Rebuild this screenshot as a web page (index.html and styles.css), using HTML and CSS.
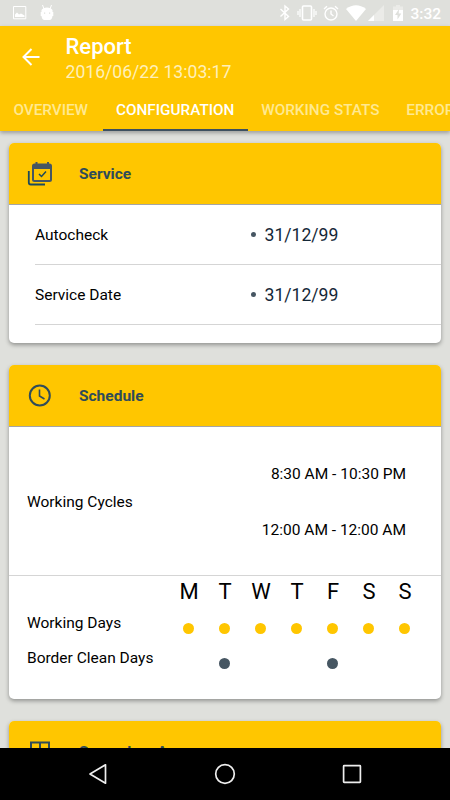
FILE: index.html
```html
<!DOCTYPE html>
<html lang="en">
<head>
    <meta charset="UTF-8">
    <meta name="viewport" content="width=device-width, initial-scale=1.0">
    <title>Report</title>
    <link rel="stylesheet" href="styles.css">
</head>
<body>
    <div class="status-bar">
        <div class="status-left">
            <svg width="14" height="14" viewBox="0 0 14 14"><path d="M.5.5h12.3v12.3H.5z" fill="none" stroke="#fff"/><path d="M2 11V8.500l2-2 2 2 2-1 3.500 2V11z" fill="#fff"/></svg>
            <svg width="14" height="17" viewBox="0 0 14 17"><path d="M2.500 1L4 5M11.500 1L10 5" stroke="#fff"/><path fill="#fff" fill-rule="evenodd" d="M1.500 6Q3 3.500 7 3.500T12.500 6v2h.8v4h-.8q-.5 4-3 4h-5q-2.500 0-3-4H.7V8h.8zM4 8.500v1.200h1.200V8.500zM9 8.500v1.200h1.200V8.500z"/></svg>
        </div>
        <div class="status-right">
            <svg width="12" height="18" viewBox="0 0 12 18"><path d="M1.500 5l8 7.500L6 15.500V2l3.500 3-8 7.500" fill="none" stroke="#fff" stroke-width="1.400"/></svg>
            <svg width="20" height="16" viewBox="0 0 20 16"><rect x="5.500" y="1" width="9" height="14" rx="1" fill="none" stroke="#fff" stroke-width="1.600"/><path d="M3 4v8M1 6v4M17 4v8M19 6v4" stroke="#fff" stroke-width="1.200"/></svg>
            <svg width="16" height="16" viewBox="0 0 16 16"><g fill="none" stroke="#fff" stroke-width="1.400"><circle cx="8" cy="9" r="6"/><path d="M8 5.500V9l2.500 2M1 4l3-2.700M15 4l-3-2.700"/></g></svg>
            <svg class="wifi" width="20" height="16" viewBox="0 0 20 16"><path d="M0 4q10-7.500 20 0L10 16z" fill="#fff"/></svg>
            <svg class="signal" width="16" height="16" viewBox="0 0 16 16"><path d="M0 16L16 0v16z" fill="#ebebe8"/><path d="M0 16l6-6v6z" fill="#fff"/></svg>
            <svg class="battery" width="10" height="16" viewBox="0 0 10 16"><path d="M3 0h4v1.500h3V5H0V1.500h3z" fill="#ebebe8"/><path d="M0 5h10v11H0z" fill="#fff"/><path d="M6 4L2 10h2.500v4.500L8.300 8.500H5.700z" fill="#dfe0dc"/></svg>
            <span class="clock">3:32</span>
        </div>
    </div>

    <header>
        <div class="toolbar">
            <svg class="back" width="18" height="18" viewBox="0 0 18 18"><path d="M17.500 9H2M9.500 1L1.500 9l8 8" fill="none" stroke="#fff" stroke-width="2"/></svg>
            <div>
                <h1>Report</h1>
                <p class="subtitle">2016/06/22 13:03:17</p>
            </div>
        </div>
        <nav class="tabs">
            <a class="tab">OVERVIEW</a>
            <a class="tab active">CONFIGURATION</a>
            <a class="tab">WORKING STATS</a>
            <a class="tab">ERRORS</a>
        </nav>
    </header>

    <main>
        <section class="card">
            <div class="card-header">
                <svg width="26" height="26" viewBox="0 0 26 26"><path d="M1.800 10v11.500q0 2 2 2H18" fill="none" stroke="#1d4a5c" stroke-width="1.800"/><rect x="6" y="3.500" width="18" height="16.500" rx="1.500" fill="none" stroke="#465662" stroke-width="2"/><path d="M6 3h18v5H6zM8.500 1h2v3h-2zM20 1h2v3h-2z" fill="#465662"/><path d="M12 13l2.500 2.500 4.500-5" fill="none" stroke="#1d4a5c" stroke-width="1.500"/></svg>
                <h2>Service</h2>
            </div>
            <div class="service-list">
                <div class="service-row">
                    <span class="label">Autocheck</span>
                    <span class="date">31/12/99</span>
                </div>
                <div class="service-row">
                    <span class="label">Service Date</span>
                    <span class="date">31/12/99</span>
                </div>
            </div>
        </section>

        <section class="card schedule">
            <div class="card-header">
                <svg width="26" height="26" viewBox="0 0 26 26"><g fill="none" stroke="#304c59"><circle cx="12.800" cy="12.500" r="10" stroke-width="2"/><path d="M12.500 6.500v6.500l5 3" stroke-width="1.600"/></g></svg>
                <h2>Schedule</h2>
            </div>
            <div class="cycles">
                <span class="label">Working Cycles</span>
                <div class="times">
                    <span>8:30 AM - 10:30 PM</span>
                    <span>12:00 AM - 12:00 AM</span>
                </div>
            </div>
            <div class="days">
                <div class="days-row names">
                    <span class="label"></span>
                    <span>M</span><span>T</span><span>W</span><span>T</span><span>F</span><span>S</span><span>S</span>
                </div>
                <div class="days-row">
                    <span class="label">Working Days</span>
                    <i class="dot"></i><i class="dot"></i><i class="dot"></i><i class="dot"></i><i class="dot"></i><i class="dot"></i><i class="dot"></i>
                </div>
                <div class="days-row">
                    <span class="label">Border Clean Days</span>
                    <i></i><i class="dot dark"></i><i></i><i></i><i class="dot dark"></i><i></i><i></i>
                </div>
            </div>
        </section>

        <section class="card">
            <div class="card-header">
                <svg width="26" height="26" viewBox="0 0 26 26"><path d="M4 3.500h18v18H4zM13 3.500v18M4 12.500h18" fill="none" stroke="#304c59" stroke-width="2"/></svg>
                <h2>Secondary Areas</h2>
            </div>
        </section>
    </main>

    <footer class="nav-bar">
        <svg width="20" height="22" viewBox="0 0 20 22"><path d="M17.500 1.800v18.400L2 11z" fill="none" stroke="#eee" stroke-width="1.700" stroke-linejoin="round"/></svg>
        <svg width="22" height="22" viewBox="0 0 22 22"><circle cx="11" cy="11" r="9.300" fill="none" stroke="#eee" stroke-width="1.700"/></svg>
        <svg width="20" height="20" viewBox="0 0 20 20"><rect x="1.600" y="1.600" width="16.800" height="16.800" rx=".6" fill="none" stroke="#eee" stroke-width="1.700"/></svg>
    </footer>
</body>
</html>
```
FILE: styles.css
```css
* {
    margin: 0;
    padding: 0;
    box-sizing: border-box;
}

body {
    display: flex;
    flex-direction: column;
    height: 800px;
    overflow: hidden;
    background-color: #dfe0dc;
    font-family: Roboto, sans-serif;
    font-size: 15.5px;
    color: #000;
}

svg {
    display: block;
    flex-shrink: 0;
}

.status-bar {
    display: flex;
    justify-content: space-between;
    height: 26px;
    flex-shrink: 0;
    padding: 0 9px 0 13px;
}

.status-left,
.status-right {
    display: flex;
    align-items: center;
}

.status-left {
    gap: 13px;
}

.status-left svg:last-child {
    margin-bottom: 2px;
}

.status-right {
    gap: 6px;
}

.wifi {
    margin-left: 1px;
}

.signal {
    margin-left: -4px;
}

.battery {
    margin-left: 3px;
}

.clock {
    margin: 2px 0 0 1px;
    font-size: 15.5px;
    font-weight: 500;
    color: #fff;
}

/* Header */
header {
    height: 105px;
    flex-shrink: 0;
    background-color: #ffc600;
    box-shadow: 0 2px 4px rgba(0, 0, 0, 0.3);
}

.toolbar {
    display: flex;
    height: 63px;
    padding: 7px 0 0 22px;
}

.back {
    margin: 15px 25.5px 0 0;
}

h1 {
    font-size: 22px;
    font-weight: 500;
    line-height: 27px;
    color: #fff;
}

.subtitle {
    font-size: 17.6px;
    line-height: 25px;
    color: #fff0b8;
}

.tabs {
    display: flex;
    height: 42px;
    overflow: hidden;
}

.tab {
    flex-shrink: 0;
    height: 42px;
    padding: 0 13.4px;
    font-size: 15.3px;
    font-weight: 500;
    line-height: 42px;
    color: #ffe991;
}

.tab:first-child {
    width: 102.6px;
}

.tab.active {
    color: #fff;
    border-bottom: 2px solid #3d5060;
}

/* Cards */
main {
    flex: 1;
    min-height: 0;
    overflow: hidden;
    padding: 12px 9px 0;
}

.card {
    height: 200px;
    margin-bottom: 22px;
    border-radius: 5px;
    background-color: #fff;
    box-shadow: 0 2px 4px rgba(0, 0, 0, 0.35);
}

.card.schedule {
    height: 334px;
}

.card-header {
    display: flex;
    align-items: center;
    gap: 26px;
    height: 62px;
    padding-left: 18px;
    background-color: #ffc600;
    border-bottom: 1px solid #a5a5a5;
    border-radius: 5px 5px 0 0;
}

h2 {
    font-size: 15.5px;
    font-weight: 700;
    color: #2e4b59;
}

.service-list {
    padding-left: 26px;
}

.service-row {
    display: flex;
    align-items: center;
    height: 60px;
    border-bottom: 1px solid #d5d5d5;
}

.service-row .label {
    width: 216px;
}

.date {
    display: flex;
    align-items: center;
    gap: 8.5px;
    font-size: 17.6px;
    color: #152838;
}

.date::before {
    content: "";
    width: 5px;
    height: 5px;
    border-radius: 50%;
    background-color: #465662;
}

.cycles {
    display: flex;
    align-items: center;
    justify-content: space-between;
    height: 149px;
    padding: 2px 35px 0 18px;
    border-bottom: 1px solid #d5d5d5;
}

.times {
    display: flex;
    flex-direction: column;
    gap: 38px;
    line-height: 18px;
    text-align: right;
}

.days-row {
    display: grid;
    grid-template-columns: 144px repeat(7, 36px);
    justify-items: center;
    height: 35px;
    padding-left: 18px;
}

.days-row .label {
    justify-self: start;
    padding-top: 1px;
}

.names {
    height: 37px;
    font-size: 22px;
    line-height: 32px;
}

.dot {
    width: 11px;
    height: 11px;
    margin: 10px 1px 0 0;
    border-radius: 50%;
    background-color: #ffc600;
}

.dot.dark {
    background-color: #465662;
}

/* System navigation */
.nav-bar {
    display: flex;
    align-items: center;
    justify-content: space-between;
    height: 52px;
    flex-shrink: 0;
    padding: 0 88px;
    background-color: #000;
}
```
